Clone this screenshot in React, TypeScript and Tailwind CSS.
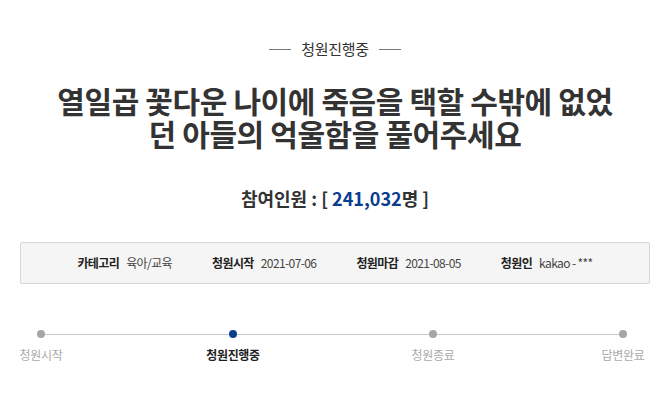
import React from 'react';

const info = [
  { label: '카테고리', value: '육아/교육' },
  { label: '청원시작', value: '2021-07-06' },
  { label: '청원마감', value: '2021-08-05' },
  { label: '청원인', value: 'kakao - ***' },
];

const steps = [
  { name: '청원시작', active: false },
  { name: '청원진행중', active: true },
  { name: '청원종료', active: false },
  { name: '답변완료', active: false },
];

// segment widths between the dots
const segs = ['w-[184px]', 'w-[192px]', 'w-[182px]'];

export default function App() {
  return (
    <div className="w-[670px] h-[417px] bg-white text-[#333] font-['Noto_Sans_CJK_KR',sans-serif]">
      <div className="pt-[39px] flex items-center justify-center gap-[10px]">
        <span className="w-[22px] h-px bg-[#777]"></span>
        <span className="text-[15px] leading-[20px] tracking-[-0.3px]">청원진행중</span>
        <span className="w-[22px] h-px bg-[#777]"></span>
      </div>

      <h1 className="mx-auto mt-[25px] w-[564px] text-center text-[30px] leading-[33px] font-bold tracking-[-0.4px]">
        열일곱 꽃다운 나이에 죽음을 택할 수밖에 없었던 아들의 억울함을 풀어주세요
      </h1>

      <p className="mt-[35px] text-center text-[18px] leading-[26px] font-bold">
        참여인원 : [ <span className="text-[#0b3d8f]">241,032</span>명 ]
      </p>

      <div className="mx-[20px] mt-[31px] h-[42px] rounded-[2px] border border-[#d5d5d5] bg-[#f5f5f5] flex items-center justify-center gap-[40px] text-[12px] tracking-[-0.6px]">
        {info.map((it) => (
          <div key={it.label} className="flex items-center gap-[7px]">
            <span className="font-bold text-[#222]">{it.label}</span>
            <span className="text-[#444]">{it.value}</span>
          </div>
        ))}
      </div>

      <div className="mt-[46px] pl-[37px] flex items-center">
        {steps.map((s, i) => (
          <React.Fragment key={s.name}>
            <div className="relative w-[8px] h-[8px]">
              <span
                className={`block w-[8px] h-[8px] rounded-full ${s.active ? 'bg-[#0b3d8f]' : 'bg-[#a6a6a6]'}`}
              ></span>
              <span
                className={`absolute left-1/2 top-[16px] -translate-x-1/2 whitespace-nowrap text-[12px] leading-[18px] tracking-[-0.3px] ${s.active ? 'font-bold text-[#222]' : 'text-[#aaa]'}`}
              >
                {s.name}
              </span>
            </div>
            {i < 3 && <span className={`${segs[i]} h-px bg-[#c8c8c8]`}></span>}
          </React.Fragment>
        ))}
      </div>
    </div>
  );
}
